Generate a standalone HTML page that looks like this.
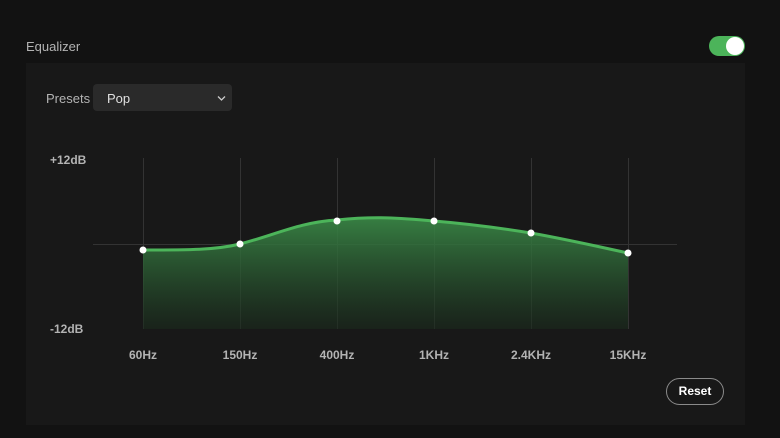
<!DOCTYPE html>
<html><head><style>
body{margin:0;width:780px;height:438px;background:#121212;font-family:"Liberation Sans",sans-serif;position:relative;overflow:hidden}
.t{position:absolute;color:#b3b3b3;font-size:12px}
.panel{position:absolute;left:26px;top:63px;width:719px;height:362px;background:#181818}
.sel{position:absolute;left:93px;top:84px;width:139px;height:27px;background:#2a2a2a;border-radius:4px;color:#e0e0e0;font-size:13px}
.lbl{position:absolute;color:#b3b3b3;font-size:12px;font-weight:bold}
</style></head><body>
<div class="t" style="left:26px;top:39px;font-size:13px">Equalizer</div>
<div style="position:absolute;left:709px;top:36px;width:36px;height:20px;border-radius:10px;background:#4cb45a"></div>
<div style="position:absolute;left:726px;top:37px;width:18px;height:18px;border-radius:9px;background:#fff"></div>
<div class="panel"></div>
<div class="t" style="left:46px;top:91px;font-size:13px">Presets</div>
<div class="sel"><span style="position:absolute;left:14px;top:7px">Pop</span>
<svg style="position:absolute;left:124px;top:11px" width="9" height="7"><path d="M1 1.5L4.5 5L8 1.5" stroke="#ccc" stroke-width="1.3" fill="none"/></svg></div>
<div class="lbl" style="left:50px;top:153px">+12dB</div>
<div class="lbl" style="left:50px;top:322px">-12dB</div>
<svg style="position:absolute;left:0;top:0" width="780" height="438">
<defs><linearGradient id="g" x1="0" y1="0" x2="0" y2="1"><stop offset="0" stop-color="#3a8a47" stop-opacity=".9"/><stop offset="1" stop-color="#1a2a1c" stop-opacity=".6"/></linearGradient></defs>
<g stroke="#333" stroke-width="1"><line x1="143.5" y1="158" x2="143.5" y2="329"/><line x1="240.5" y1="158" x2="240.5" y2="329"/><line x1="337.5" y1="158" x2="337.5" y2="329"/><line x1="434.5" y1="158" x2="434.5" y2="329"/><line x1="531.5" y1="158" x2="531.5" y2="329"/><line x1="628.5" y1="158" x2="628.5" y2="329"/><line x1="93" y1="244.5" x2="677" y2="244.5"/></g>
<path d="M143 250 C190 250 215 250 240 244 C275 235 300 222 337 220 C375 216 400 218 434 221 C470 224 500 228 531 233 C570 240 600 247 628 253 L628 329 L143 329 Z" fill="url(#g)"/>
<path d="M143 250 C190 250 215 250 240 244 C275 235 300 222 337 220 C375 216 400 218 434 221 C470 224 500 228 531 233 C570 240 600 247 628 253" fill="none" stroke="#4cb45a" stroke-width="3"/>
<g fill="#fff"><circle cx="143" cy="250" r="3.5"/><circle cx="240" cy="244" r="3.5"/><circle cx="337" cy="221" r="3.5"/><circle cx="434" cy="221" r="3.5"/><circle cx="531" cy="233" r="3.5"/><circle cx="628" cy="253" r="3.5"/></g>
<g fill="#b3b3b3" font-size="12" font-weight="bold" font-family="Liberation Sans" text-anchor="middle"><text x="143" y="359">60Hz</text><text x="240" y="359">150Hz</text><text x="337" y="359">400Hz</text><text x="434" y="359">1KHz</text><text x="531" y="359">2.4KHz</text><text x="628" y="359">15KHz</text></g>
</svg>
<div style="position:absolute;left:666px;top:378px;width:56px;height:25px;border:1px solid #8a8a8a;border-radius:14px;color:#fff;font-size:12px;font-weight:bold;text-align:center;line-height:25px">Reset</div>
</body></html>
